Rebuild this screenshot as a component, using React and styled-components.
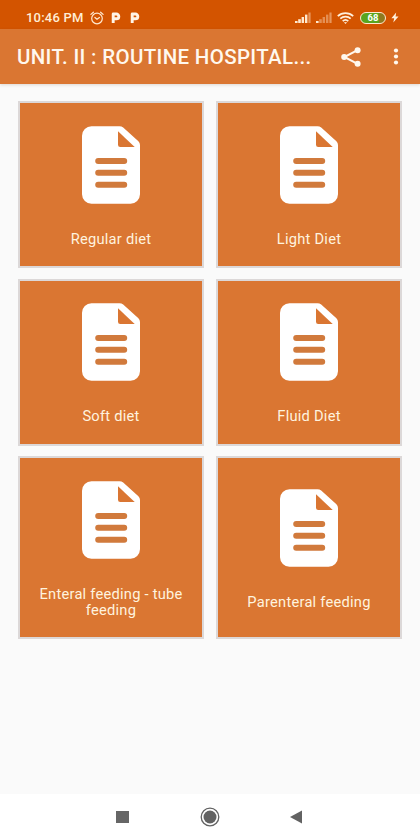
import React from 'react';
import styled, { createGlobalStyle } from 'styled-components';

const topics = [
  'Regular diet',
  'Light Diet',
  'Soft diet',
  'Fluid Diet',
  'Enteral feeding - tube feeding',
  'Parenteral feeding',
];

const SignalIcon = ({ active }) => (
  <svg width="16" height="11" viewBox="0 0 16 11" fill="#ffe9cf">
    <rect x="0" y="9" width="2.6" height="2" />
    <rect x="3.2" y="7.2" width="2.6" height="3.8" opacity={active > 1 ? 1 : 0.4} />
    <rect x="6.6" y="5" width="2.4" height="6" opacity={active > 2 ? 1 : 0.4} />
    <rect x="10" y="2.6" width="2.4" height="8.4" opacity={active > 3 ? 1 : 0.4} />
    <rect x="13.4" y="0.5" width="2.2" height="10.5" opacity="0.45" />
  </svg>
);

const AlarmIcon = () => (
  <svg width="14" height="14" viewBox="0 0 14 14" fill="none" stroke="#ffe9cf" strokeWidth="1.2" strokeLinecap="round">
    <circle cx="7" cy="7.5" r="5.3" />
    <path d="M0.9 3.4 3.4 1.2M13.1 3.4 10.6 1.2M4.9 6.5 7 8.3 9.4 6.5" />
  </svg>
);

const ParkingIcon = () => (
  <svg width="10" height="11" viewBox="0 0 10 11" fill="none">
    <path d="M2.2 11V2H5.400A2.400 2.400 0 0 1 5.400 6.800H2.200" stroke="#fff4e6" strokeWidth="2.900" strokeLinejoin="round" />
  </svg>
);

const WifiIcon = () => (
  <svg width="17" height="12" viewBox="0 0 17 12" fill="none" stroke="#fff0dc" strokeWidth="1.7">
    <path d="M0.8 4.2a11.2 11.2 0 0 1 15.4 0M3.3 6.7a7.6 7.6 0 0 1 10.4 0M5.7 9.1a4.2 4.2 0 0 1 5.6 0" />
    <path d="M6.9 10.2h3.2L8.5 12z" fill="#fff0dc" stroke="none" />
  </svg>
);

const BoltIcon = () => (
  <svg width="8" height="11" viewBox="0 0 8 11" fill="#fff0dc">
    <path d="M5.2 0.500 0.4 6.3h2.8L2.3 10.500l5.200-6H4.6z" />
  </svg>
);

const ShareIcon = () => (
  <svg width="20" height="20" viewBox="0 0 20 20" fill="#fff8ee">
    <path d="M16.500 3.2 3.4 10 16.500 16.800" fill="none" stroke="#fff8ee" strokeWidth="2" />
    <circle cx="16.600" cy="3.2" r="3" />
    <circle cx="3.200" cy="10" r="3" />
    <circle cx="16.600" cy="16.800" r="3" />
  </svg>
);

const MoreIcon = () => (
  <svg width="6" height="17" viewBox="0 0 6 17" fill="#fff8ee">
    <circle cx="3" cy="2.5" r="2.1" />
    <circle cx="3" cy="8.5" r="2.1" />
    <circle cx="3" cy="14.5" r="2.1" />
  </svg>
);

const DocumentIcon = () => (
  <svg width="58" height="78" viewBox="0 0 58 78">
    <path
      d="M9.5 0.200H37.5Q39.6 0.200 41.2 1.6L56.4 15.2Q58 16.7 58 19V68.3A9.5 9.5 0 0 1 48.5 77.7H9.5A9.5 9.5 0 0 1 0 68.3V9.7A9.5 9.5 0 0 1 9.5 0.200Z"
      fill="#fff"
    />
    <path d="M36 5.2 52.7 20.9H38.2Q36 20.9 36 18.7Z" fill="#da7632" />
    <path d="M16.2 35H42.2M16.2 46.800H42.2M16.2 58.700H42.2" stroke="#d17a3c" strokeWidth="6" strokeLinecap="round" />
  </svg>
);

const App = () => (
  <>
    <GlobalStyle />
    <Screen>
      <StatusBar>
        <Clock>10:46 PM</Clock>
        <Notifications>
          <AlarmIcon />
          <ParkingIcon />
          <ParkingIcon />
        </Notifications>
        <SystemIcons>
          <SignalIcon active={4} />
          <SignalIcon active={1} />
          <WifiIcon />
          <Battery>68</Battery>
          <BoltIcon />
        </SystemIcons>
      </StatusBar>
      <AppBar>
        <Title>UNIT. II : ROUTINE HOSPITAL...</Title>
        <BarButton aria-label="Share"><ShareIcon /></BarButton>
        <BarButton aria-label="More options"><MoreIcon /></BarButton>
      </AppBar>
      <Grid>
        {topics.map((topic) => (
          <Card key={topic}>
            <DocumentIcon />
            <Label>{topic}</Label>
          </Card>
        ))}
      </Grid>
      <NavBar>
        <NavButton aria-label="Recent apps">
          <svg width="13" height="12"><rect width="13" height="12" fill="#666" /></svg>
        </NavButton>
        <NavButton aria-label="Home">
          <svg width="20" height="20" viewBox="0 0 20 20">
            <circle cx="10" cy="10" r="8.8" fill="none" stroke="#626262" strokeWidth="1.3" />
            <circle cx="10" cy="10" r="6.5" fill="#626262" />
          </svg>
        </NavButton>
        <NavButton aria-label="Back">
          <svg width="12" height="14"><path d="M0 7 12 0.5V13.5Z" fill="#626262" /></svg>
        </NavButton>
      </NavBar>
    </Screen>
  </>
);

const GlobalStyle = createGlobalStyle`
  * {
    box-sizing: border-box;
  }

  body {
    margin: 0;
    font-family: Roboto, sans-serif;
  }

  svg {
    display: block;
    flex-shrink: 0;
  }
`;

const Screen = styled.div`
  display: flex;
  flex-direction: column;
  width: 420px;
  height: 840px;
  background: #fafafa;
  overflow: hidden;
`;

const StatusBar = styled.div`
  display: flex;
  align-items: center;
  height: 29px;
  padding: 6px 21px 0 26px;
  background: #d35400;
  color: #ffedd6;
`;

const Clock = styled.span`
  width: 64px;
  font-size: 13px;
  font-weight: 500;
  letter-spacing: 0.2px;
  white-space: nowrap;
`;

const Notifications = styled.div`
  display: flex;
  align-items: center;
  gap: 9px;

  svg:first-child {
    margin-right: -2px;
  }
`;

const SystemIcons = styled.div`
  display: flex;
  align-items: center;
  gap: 5px;
  margin-left: auto;
`;

const Battery = styled.div`
  width: 26px;
  height: 12px;
  margin-left: 1px;
  border: 1px solid #ffe9cf;
  border-radius: 6px;
  background: linear-gradient(90deg, #5aa51e 76%, #8d7a20 76%);
  color: #fff;
  font-size: 9.5px;
  font-weight: 700;
  line-height: 10px;
  text-align: center;
`;

const AppBar = styled.div`
  display: flex;
  align-items: center;
  height: 55px;
  flex-shrink: 0;
  padding: 0 21px 0 17px;
  background: #da7632;
  box-shadow: 0 1px 3px rgba(90, 60, 30, 0.18);
`;

const Title = styled.h1`
  flex: 1;
  margin: 0;
  padding-top: 1px;
  color: #fff8ee;
  font-size: 20.5px;
  font-weight: 500;
  letter-spacing: 0.33px;
  white-space: nowrap;
`;

const BarButton = styled.button`
  display: flex;
  padding: 0;
  border: 0;
  background: none;

  & + & {
    margin-left: 32px;
  }
`;

const Grid = styled.div`
  display: grid;
  grid-template-columns: 186px 186px;
  grid-template-rows: 167px 167px 183px;
  gap: 10.5px 12px;
  flex: 1;
  padding: 17px 18px 0;
`;

const Card = styled.div`
  display: flex;
  flex-direction: column;
  align-items: center;
  justify-content: center;
  padding: 3px 12px 0;
  border: 2px solid #dcd8d8;
  background: #da7632;
`;

const Label = styled.div`
  margin-top: 27px;
  color: #fff3df;
  font-size: 14.7px;
  letter-spacing: 0.23px;
  line-height: 16px;
  text-align: center;
`;

const NavBar = styled.div`
  display: flex;
  align-items: center;
  justify-content: space-between;
  height: 46px;
  padding: 0 118px 0 116px;
  background: #fff;
`;

const NavButton = styled.button`
  display: flex;
  padding: 0;
  border: 0;
  background: none;
`;

export default App;
